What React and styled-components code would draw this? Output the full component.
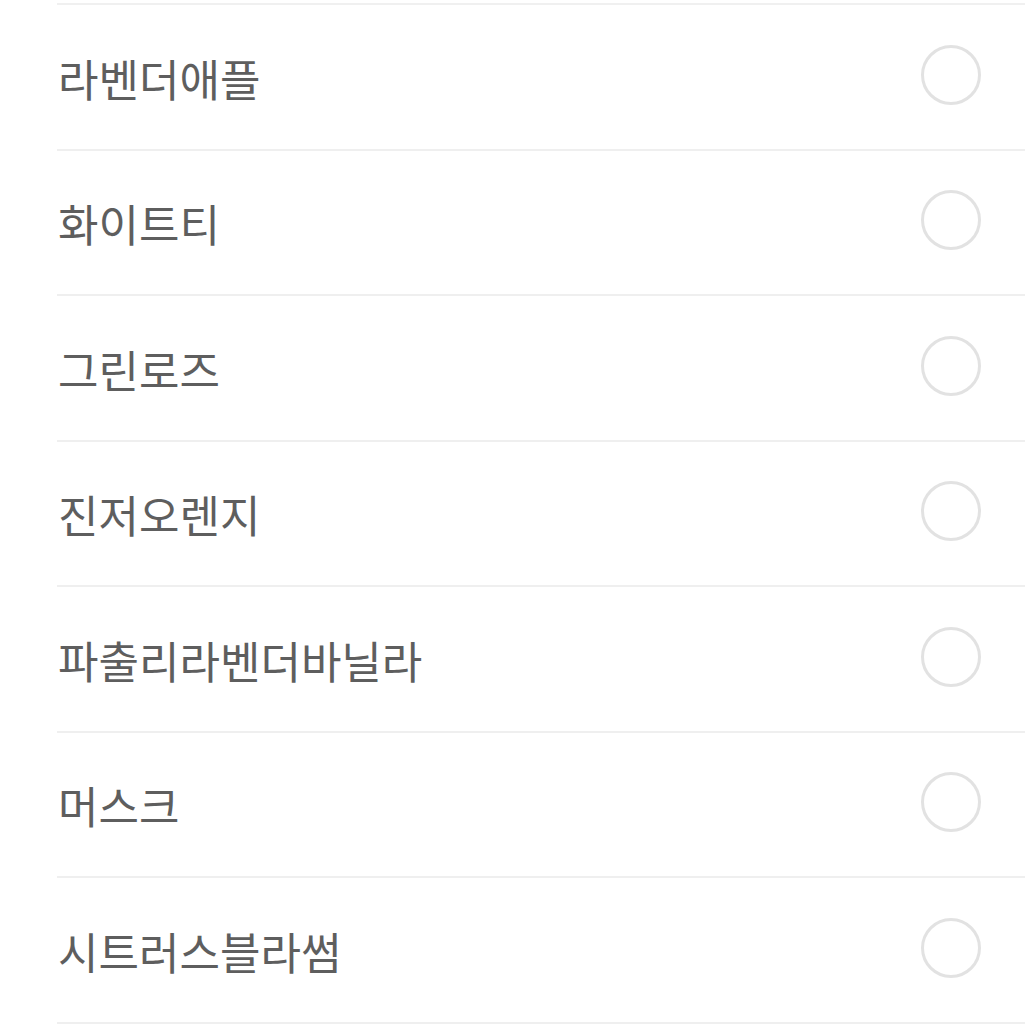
import styled, { createGlobalStyle } from 'styled-components'

const SCENTS = ['라벤더애플', '화이트티', '그린로즈', '진저오렌지', '파출리라벤더바닐라', '머스크', '시트러스블라썸']

const GlobalStyle = createGlobalStyle`
  body {
    margin: 0;
    background: #fff;
    font-family: 'Noto Sans CJK KR', 'Noto Sans', sans-serif;
  }
`

const List = styled.ul`
  list-style: none;
  margin: 3px 0 0 57px;
  padding: 0;
  border-top: 2px solid #f0f0f0;
`

const Row = styled.li`
  height: 143.5px;
  display: flex;
  align-items: center;
  justify-content: space-between;
  padding: 0 44px 0 1px;
  border-bottom: 2px solid #efefef;
`

const Label = styled.span`
  font-size: 44px;
  color: #5e5e5e;
  line-height: 1;
  margin-top: 2px;
`

const Radio = styled.span`
  width: 54px;
  height: 54px;
  border: 3px solid #e2e2e2;
  border-radius: 50%;
  margin-top: -4px;
`

function App() {
  return (
    <>
      <GlobalStyle />
      <List>
        {SCENTS.map(name => (
          <Row key={name}>
            <Label>{name}</Label>
            <Radio />
          </Row>
        ))}
      </List>
    </>
  )
}

export default App
